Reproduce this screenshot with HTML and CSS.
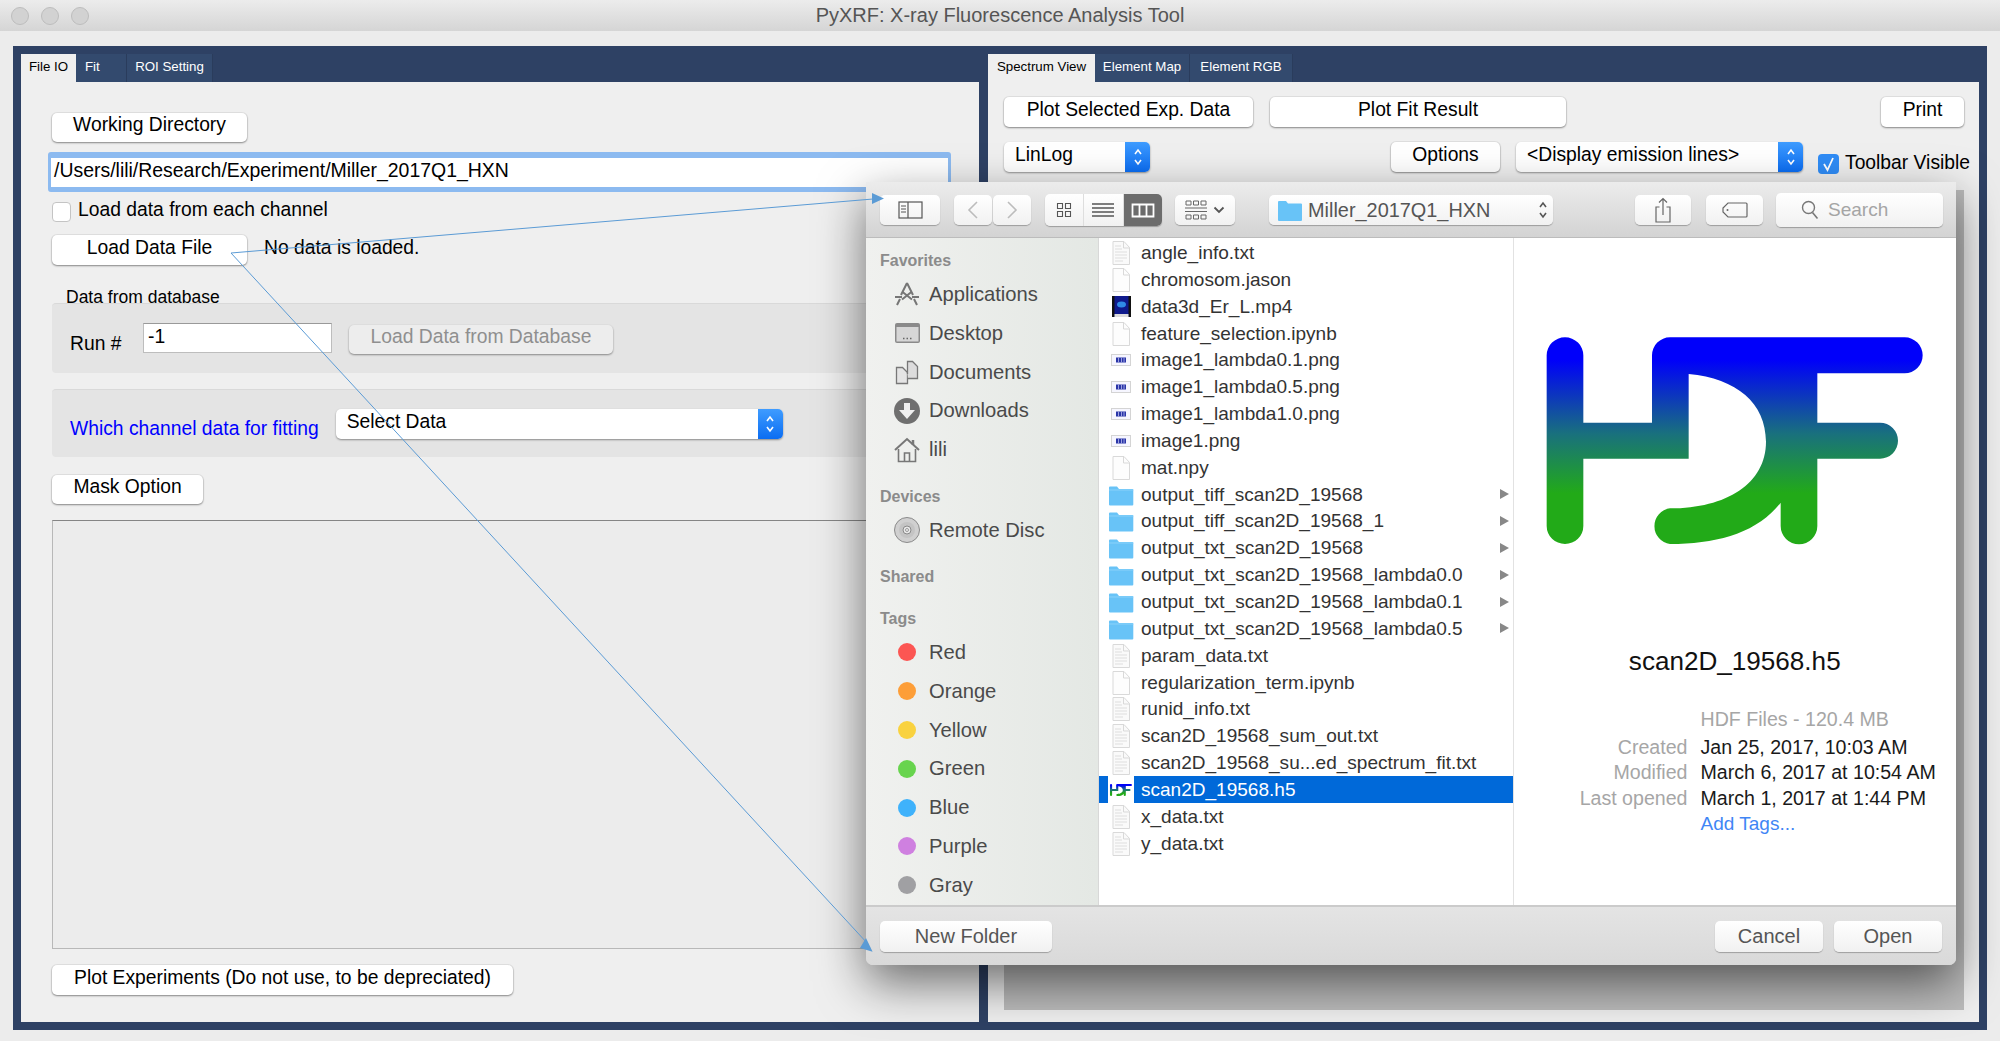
FILE: index.html
```html
<!DOCTYPE html>
<html lang="en">
<head>
  <meta charset="UTF-8">
  <title>PyXRF: X-ray Fluorescence Analysis Tool</title>
  <link rel="stylesheet" href="styles.css">
</head>
<body>
  <svg class="sprite" width="0" height="0">
    <defs>
      <linearGradient id="hdfFill" gradientUnits="userSpaceOnUse" x1="0" y1="120" x2="0" y2="520">
        <stop offset="0" stop-color="#0000fa"/>
        <stop offset="0.55" stop-color="#19707e"/>
        <stop offset="1" stop-color="#22aa18"/>
      </linearGradient>
      <symbol id="hdf" viewBox="0 0 1230 720">
        <path fill="url(#hdfFill)" d="M50 106A55 54 0 0 1 160 106L160 308 366 308 366 106A54 54 0 0 1 420 52L1124 52A54 54 0 0 1 1124 160L862 160 862 308 1050 308A54 54 0 0 1 1050 416L862 416 862 618A55 55 0 0 1 752 618L752 548C680 640 560 672 420 672A54 54 0 0 1 420 565C590 565 708 490 708 365 708 250 620 175 476 162L476 416 160 416 160 618A55 54 0 0 1 50 618Z"/>
      </symbol>
      <symbol id="doc" viewBox="0 0 26 26">
        <path d="M5 1.5h11l5.500 6v17H5z" fill="#fdfdfd" stroke="#d9d9d9"/>
        <path d="M15.500 1.500v6.500h6" fill="none" stroke="#d9d9d9"/>
      </symbol>
      <symbol id="txt" viewBox="0 0 26 26">
        <path d="M5 1.500h11l5.500 6v17H5z" fill="#fafafa" stroke="#d9d9d9"/>
        <path d="M15.500 1.500v6.500h6" fill="none" stroke="#d9d9d9"/>
        <path d="M7 6h6M7 9h7M7 12h12M7 15h12M7 18h12M7 21h8" stroke="#dedede"/>
      </symbol>
      <symbol id="png" viewBox="0 0 26 26">
        <rect x="3.500" y="7.500" width="19" height="11" fill="#f6f6ff" stroke="#d4d4d4"/>
        <rect x="8" y="10.500" width="10" height="5" fill="#2a35a8"/>
        <path d="M10.500 10.500v5M13.500 10.500v5M16 10.500v5" stroke="#9aa0e0"/>
      </symbol>
      <symbol id="mp4" viewBox="0 0 26 26">
        <rect x="4" y="2" width="19" height="21" fill="#0f1a8c"/>
        <rect x="4" y="2" width="2.500" height="21" fill="#111"/>
        <rect x="20.500" y="2" width="2.500" height="21" fill="#111"/>
        <rect x="6.500" y="20" width="14" height="3" fill="#dcdcdc"/>
        <ellipse cx="13.500" cy="10.500" rx="4.500" ry="3" fill="#2f8be6"/>
      </symbol>
      <symbol id="folder" viewBox="0 0 26 26">
        <path d="M1 5.500a1 1 0 0 1 1-1h7l2 2.500h13.500a.8.8 0 0 1 .8.800V22.500a1 1 0 0 1-1 1H2a1 1 0 0 1-1-1z" fill="#68c3f7"/>
        <path d="M1 8h24.300" stroke="#8ad2fa"/>
      </symbol>
      <symbol id="stepper" viewBox="0 0 12 24">
        <path d="M3 9l3-4 3 4M3 15l3 4 3-4" fill="none" stroke="currentColor" stroke-width="1.600"/>
      </symbol>
    </defs>
  </svg>

  <header class="titlebar">
    <div class="lights"><span></span><span></span><span></span></div>
    <div class="title">PyXRF: X-ray Fluorescence Analysis Tool</div>
  </header>

  <main class="workspace">
    <section class="pane pane-left">
      <nav class="tabs">
        <span class="tab tab-on tab-file">File IO</span>
        <span class="tab tab-fit">Fit</span>
        <span class="tab tab-roi">ROI Setting</span>
      </nav>
      <div class="pane-body pane-body-left">
        <button class="btn w-wide">Working Directory</button>
        <div class="path-field">/Users/lili/Research/Experiment/Miller_2017Q1_HXN</div>
        <label class="check-row"><span class="check"></span>Load data from each channel</label>
        <div class="load-row">
          <button class="btn w-wide">Load Data File</button>
          <span class="load-status">No data is loaded.</span>
        </div>
        <div class="group-title">Data from database</div>
        <div class="group group-db">
          <span class="run-label">Run #</span>
          <div class="run-input">-1</div>
          <button class="btn btn-off w-db">Load Data from Database</button>
        </div>
        <div class="group group-fit">
          <span class="fit-label">Which channel data for fitting</span>
          <div class="combo w-select">
            <span class="combo-text">Select Data</span>
            <span class="combo-arrow"><svg width="12" height="24"><use href="#stepper"/></svg></span>
          </div>
        </div>
        <button class="btn w-mask">Mask Option</button>
        <div class="plot-box"></div>
        <button class="btn w-exp">Plot Experiments (Do not use, to be depreciated)</button>
      </div>
    </section>

    <section class="pane pane-right">
      <nav class="tabs">
        <span class="tab tab-on tab-spec">Spectrum View</span>
        <span class="tab tab-map">Element Map</span>
        <span class="tab tab-rgb">Element RGB</span>
      </nav>
      <div class="pane-body pane-body-right">
        <div class="plot-row">
          <button class="btn w-sel">Plot Selected Exp. Data</button>
          <button class="btn w-fit">Plot Fit Result</button>
          <button class="btn w-print">Print</button>
        </div>
        <div class="option-row">
          <div class="combo w-linlog">
            <span class="combo-text">LinLog</span>
            <span class="combo-arrow"><svg width="12" height="24"><use href="#stepper"/></svg></span>
          </div>
          <button class="btn w-options">Options</button>
          <div class="combo w-lines">
            <span class="combo-text">&lt;Display emission lines&gt;</span>
            <span class="combo-arrow"><svg width="12" height="24"><use href="#stepper"/></svg></span>
          </div>
          <label class="toolbar-check">
            <span class="check check-on"><svg width="21" height="20" viewBox="0 0 21 20"><path d="M6 10l3.500 6L15 4" fill="none" stroke="#fff" stroke-width="1.800"/></svg></span>
            Toolbar Visible
          </label>
        </div>
        <div class="spectrum"></div>
      </div>
    </section>
  </main>

  <!-- the open file sheet -->
  <div class="dialog">
    <div class="dlg-toolbar">
      <button class="tool t-side">
        <svg width="25" height="18" viewBox="0 0 25 18"><rect x="1" y="1" width="23" height="16" fill="none" stroke="#555" stroke-width="1.200"/><path d="M10 1v16M3 5h5M3 8h5M3 11h5" stroke="#555" stroke-width="1.200"/></svg>
      </button>
      <div class="nav-pair">
        <button class="tool t-nav"><svg width="14" height="20" viewBox="0 0 14 20"><path d="M11 2L3 10l8 8" fill="none" stroke="#bcbcbc" stroke-width="1.600"/></svg></button>
        <button class="tool t-nav"><svg width="14" height="20" viewBox="0 0 14 20"><path d="M3 2l8 8-8 8" fill="none" stroke="#bcbcbc" stroke-width="1.600"/></svg></button>
      </div>
      <div class="view-group">
        <span class="view-seg"><svg width="16" height="16" viewBox="0 0 16 16"><path d="M1.500 1.500h5v5h-5zM9.500 1.500h5v5h-5zM1.500 9.500h5v5h-5zM9.500 9.500h5v5h-5z" fill="none" stroke="#555" stroke-width="1.100"/></svg></span>
        <span class="view-seg"><svg width="22" height="16" viewBox="0 0 22 16"><path d="M0 2h22M0 6h22M0 10h22M0 14h22" stroke="#555" stroke-width="1.300"/></svg></span>
        <span class="view-seg view-on"><svg width="24" height="15" viewBox="0 0 24 15"><path d="M1.500 1.500h21v12h-21zM8.500 1.500v12M15.500 1.500v12" fill="none" stroke="#fff" stroke-width="1.800"/></svg></span>
      </div>
      <button class="tool t-arrange">
        <svg width="22" height="20" viewBox="0 0 22 20"><path d="M1 1h5v4H1zM8.500 1h5v4h-5zM16 1h5v4h-5zM1 15h5v4H1zM8.500 15h5v4h-5zM16 15h5v4h-5z" fill="none" stroke="#666"/><path d="M0 8h22M0 11.500h22" stroke="#666" stroke-width="1.200"/></svg>
        <svg width="12" height="8" viewBox="0 0 12 8"><path d="M1.500 1.500L6 6l4.500-4.500" fill="none" stroke="#555" stroke-width="1.800"/></svg>
      </button>
      <div class="tool t-path">
        <svg width="24" height="21" viewBox="0 0 24 21"><path d="M0 2a1 1 0 0 1 1-1h7l2 2.500h13a1 1 0 0 1 1 1V20a1 1 0 0 1-1 1H1a1 1 0 0 1-1-1z" fill="#68c3f7"/></svg>
        <span class="path-name">Miller_2017Q1_HXN</span>
        <svg class="path-step" width="12" height="24"><use href="#stepper"/></svg>
      </div>
      <button class="tool t-share">
        <svg width="18" height="26" viewBox="0 0 18 26"><path d="M5.500 10H2v15h14V10h-3.500M9 18V1.500M5 5.500l4-4 4 4" fill="none" stroke="#666" stroke-width="1.200"/></svg>
      </button>
      <button class="tool t-tag">
        <svg width="26" height="16" viewBox="0 0 26 16"><path d="M6 1h18a1 1 0 0 1 1 1v12a1 1 0 0 1-1 1H6l-5-5V6z" fill="none" stroke="#666" stroke-width="1.200"/><circle cx="5.500" cy="8" r="1" fill="#666"/></svg>
      </button>
      <div class="tool t-search">
        <svg width="18" height="20" viewBox="0 0 18 20"><circle cx="7.500" cy="7.500" r="6" fill="none" stroke="#777" stroke-width="1.400"/><path d="M11.500 12.500l5 6" stroke="#777" stroke-width="1.600"/></svg>
        <span>Search</span>
      </div>
    </div>

    <div class="dlg-main">
      <aside class="sidebar">
        <div class="side-head">Favorites</div>
        <div class="side-item">
          <svg class="side-icon" width="26" height="26" viewBox="0 0 26 26"><path d="M13 2L7 14M13 2l6 12M8 10.500l10 8M18 10.500L8 18.500M1 16h7M18 16h7M3 24l3-6M23 24l-3-6" fill="none" stroke="#767676" stroke-width="2"/></svg>
          Applications
        </div>
        <div class="side-item">
          <svg class="side-icon" width="26" height="26" viewBox="0 0 26 26"><rect x="1" y="3" width="25" height="20" rx="2" fill="#8a8a8a"/><rect x="2.500" y="7" width="22" height="14.500" fill="#d6d6d6"/><path d="M9 18.500h1.500M12.500 18.500H14M16 18.500h1.500" stroke="#666" stroke-width="1.500"/></svg>
          Desktop
        </div>
        <div class="side-item">
          <svg class="side-icon" width="26" height="26" viewBox="0 0 26 26"><path d="M2.500 8.500h6l5 5v11h-11z" fill="#e4e4e4" stroke="#777" stroke-width="1.300"/><path d="M13.500 15V2.500h5l5 5v12h-9.500" fill="#dcdcdc" stroke="#777" stroke-width="1.300"/></svg>
          Documents
        </div>
        <div class="side-item">
          <svg class="side-icon" width="26" height="26" viewBox="0 0 26 26"><circle cx="13" cy="13" r="13" fill="#6f6f6f"/><path d="M10 5h6v7h5l-8 9-8-9h5z" fill="#efefef"/></svg>
          Downloads
        </div>
        <div class="side-item">
          <svg class="side-icon" width="26" height="26" viewBox="0 0 26 26"><path d="M1 13L13 2l12 11" fill="none" stroke="#777" stroke-width="2"/><path d="M4.500 12v12.500h17V12M10.500 24.500V16h5v8.500" fill="none" stroke="#777" stroke-width="1.600"/><path d="M19 3v5" stroke="#777" stroke-width="2.500"/></svg>
          lili
        </div>
        <div class="side-head">Devices</div>
        <div class="side-item">
          <svg class="side-icon" width="26" height="26" viewBox="0 0 26 26"><circle cx="13" cy="13" r="12.500" fill="#d0d0d0" stroke="#8a8a8a"/><circle cx="13" cy="13" r="8" fill="#c4c4c4"/><circle cx="13" cy="13" r="4" fill="#e8e8e8" stroke="#8a8a8a"/><circle cx="13" cy="13" r="1.500" fill="#f4f4f4" stroke="#999"/></svg>
          Remote Disc
        </div>
        <div class="side-head">Shared</div>
        <div class="side-head side-head-tags">Tags</div>
        <div class="side-item"><span class="dot dot-red"></span>Red</div>
        <div class="side-item"><span class="dot dot-orange"></span>Orange</div>
        <div class="side-item"><span class="dot dot-yellow"></span>Yellow</div>
        <div class="side-item"><span class="dot dot-green"></span>Green</div>
        <div class="side-item"><span class="dot dot-blue"></span>Blue</div>
        <div class="side-item"><span class="dot dot-purple"></span>Purple</div>
        <div class="side-item"><span class="dot dot-gray"></span>Gray</div>
      </aside>

      <div class="file-list">
        <div class="file"><svg width="26" height="26"><use href="#txt"/></svg>angle_info.txt</div>
        <div class="file"><svg width="26" height="26"><use href="#doc"/></svg>chromosom.jason</div>
        <div class="file"><svg width="26" height="26"><use href="#mp4"/></svg>data3d_Er_L.mp4</div>
        <div class="file"><svg width="26" height="26"><use href="#doc"/></svg>feature_selection.ipynb</div>
        <div class="file"><svg width="26" height="26"><use href="#png"/></svg>image1_lambda0.1.png</div>
        <div class="file"><svg width="26" height="26"><use href="#png"/></svg>image1_lambda0.5.png</div>
        <div class="file"><svg width="26" height="26"><use href="#png"/></svg>image1_lambda1.0.png</div>
        <div class="file"><svg width="26" height="26"><use href="#png"/></svg>image1.png</div>
        <div class="file"><svg width="26" height="26"><use href="#doc"/></svg>mat.npy</div>
        <div class="file dir"><svg width="26" height="26"><use href="#folder"/></svg>output_tiff_scan2D_19568</div>
        <div class="file dir"><svg width="26" height="26"><use href="#folder"/></svg>output_tiff_scan2D_19568_1</div>
        <div class="file dir"><svg width="26" height="26"><use href="#folder"/></svg>output_txt_scan2D_19568</div>
        <div class="file dir"><svg width="26" height="26"><use href="#folder"/></svg>output_txt_scan2D_19568_lambda0.0</div>
        <div class="file dir"><svg width="26" height="26"><use href="#folder"/></svg>output_txt_scan2D_19568_lambda0.1</div>
        <div class="file dir"><svg width="26" height="26"><use href="#folder"/></svg>output_txt_scan2D_19568_lambda0.5</div>
        <div class="file"><svg width="26" height="26"><use href="#txt"/></svg>param_data.txt</div>
        <div class="file"><svg width="26" height="26"><use href="#doc"/></svg>regularization_term.ipynb</div>
        <div class="file"><svg width="26" height="26"><use href="#txt"/></svg>runid_info.txt</div>
        <div class="file"><svg width="26" height="26"><use href="#txt"/></svg>scan2D_19568_sum_out.txt</div>
        <div class="file"><svg width="26" height="26"><use href="#txt"/></svg>scan2D_19568_su...ed_spectrum_fit.txt</div>
        <div class="file file-on"><span class="h5-icon"><svg width="24" height="16" preserveAspectRatio="none"><use href="#hdf"/></svg></span>scan2D_19568.h5</div>
        <div class="file"><svg width="26" height="26"><use href="#txt"/></svg>x_data.txt</div>
        <div class="file"><svg width="26" height="26"><use href="#txt"/></svg>y_data.txt</div>
      </div>

      <div class="preview">
        <svg class="logo" width="410" height="240"><use href="#hdf"/></svg>
        <div class="preview-name">scan2D_19568.h5</div>
        <dl class="meta">
          <dt class="meta-first"></dt><dd class="meta-first meta-kind">HDF Files - 120.4 MB</dd>
          <dt>Created</dt><dd>Jan 25, 2017, 10:03 AM</dd>
          <dt>Modified</dt><dd>March 6, 2017 at 10:54 AM</dd>
          <dt>Last opened</dt><dd>March 1, 2017 at 1:44 PM</dd>
          <dt></dt><dd class="meta-link">Add Tags...</dd>
        </dl>
      </div>
    </div>

    <div class="dlg-footer">
      <button class="dlg-btn btn-folder">New Folder</button>
      <button class="dlg-btn btn-cancel">Cancel</button>
      <button class="dlg-btn">Open</button>
    </div>
  </div>

  <!-- annotation arrows drawn on top of the screenshot -->
  <svg class="arrows" width="2000" height="1041" viewBox="0 0 2000 1041">
    <path d="M231 253L873 199M231 253L868 944" fill="none" stroke="#5b9bd5" stroke-width="1"/>
    <path d="M884 198.500L872 193v11zM872.600 951.700L866 938 860 948z" fill="#5b9bd5"/>
  </svg>
</body>
</html>
```

FILE: styles.css
```css
:root {
  --navy: #2e4164;
  --panel: #efefef;
  --sheet-text: #333;
}

* {
  box-sizing: border-box;
  margin: 0;
  padding: 0;
}

body {
  position: relative;
  width: 2000px;
  height: 1041px;
  overflow: hidden;
  background: #ececec;
  color: #000;
  font-family: "Liberation Sans", Arial, sans-serif;
  font-size: 19.300px;
}

button {
  font: inherit;
  color: inherit;
  border: none;
}

.sprite {
  position: absolute;
}

/* title bar */

.titlebar {
  display: grid;
  grid-template-columns: 1fr auto 1fr;
  align-items: center;
  height: 31px;
  background: linear-gradient(#ececec, #d5d5d5);
}

.lights {
  display: flex;
  gap: 12px;
  padding-left: 11px;
}

.lights span {
  width: 18px;
  height: 18px;
  border-radius: 50%;
  background: #d2d2d2;
  border: 1px solid #bdbdbd;
}

.title {
  color: #555;
  font-size: 20px;
}

/* the two main panes */

.workspace {
  display: flex;
  height: 984px;
  margin: 15px 0 0 13px;
}

.pane {
  display: flex;
  flex-direction: column;
  background: var(--navy);
  padding-bottom: 8px;
}

.pane-left {
  width: 975px;
  padding-left: 8px;
  padding-right: 9px;
}

.pane-right {
  width: 999px;
  padding-right: 8px;
}

.tabs {
  display: flex;
  height: 36px;
  padding-top: 8px;
}

.tab {
  display: flex;
  align-items: center;
  justify-content: center;
  padding-bottom: 3px;
  font-size: 13.300px;
  color: #fff;
  background: #334a6e;
  border-right: 1px solid #2a3c5c;
}

.tab-on {
  color: #000;
  background: var(--panel);
  border: none;
}

.tab-file { width: 55px; }
.tab-fit { width: 51px; justify-content: flex-start; padding-left: 9px; }
.tab-roi { width: 86px; }
.tab-spec { width: 107px; }
.tab-map { width: 95px; }
.tab-rgb { width: 103px; }

.pane-body {
  flex: 1;
  background: var(--panel);
}

.pane-body-left {
  padding: 31px 29px 0 31px;
}

.pane-body-right {
  padding: 15px 15px 0 16px;
}

/* qt style controls */

.btn {
  display: block;
  flex: none;
  height: 29px;
  padding-bottom: 5px;
  background: #fff;
  border-radius: 5px;
  box-shadow: 0 1px 2px rgba(0, 0, 0, 0.4), 0 0 0 1px #e2e2e2;
  text-align: center;
}

.btn-off {
  color: #8f8f8f;
  background: #ededed;
}

.w-wide { width: 195px; }
.w-db { width: 264px; height: 29px; margin: 2px 0 0 17px; }
.w-mask { width: 151px; margin-top: 18px; }
.w-exp { width: 461px; height: 30px; margin-top: 16px; }
.w-sel { width: 249px; height: 30px; }
.w-fit { width: 296px; height: 30px; margin-left: 17px; }
.w-print { width: 83px; height: 30px; margin-left: auto; }
.w-options { width: 109px; height: 30px; margin-left: 241px; }
.w-linlog { width: 146px; }
.w-lines { width: 287px; margin-left: 16px; }
.w-select { width: 447px; margin-left: 17px; }

.path-field {
  width: 903px;
  height: 40px;
  margin: 10px 0 0 -4px;
  padding: 0 3px 4px;
  font-size: 19.450px;
  line-height: 25px;
  background: #fff;
  border: solid #8cbaf0;
  border-width: 6px 3px 5px;
  border-radius: 3px;
  white-space: nowrap;
}

.check-row {
  display: flex;
  align-items: flex-start;
  gap: 7px;
  height: 20px;
  margin-top: 10px;
  line-height: 16px;
}

.check {
  flex: none;
  width: 19px;
  height: 20px;
  background: #fff;
  border: 1px solid #c4c4c4;
  border-radius: 4px;
}

.check-on {
  width: 21px;
  background: #2f8cf6;
  border: none;
}

.load-row {
  display: flex;
  align-items: center;
  height: 30px;
  margin-top: 13px;
}

.load-row .btn {
  height: 30px;
}

.load-status {
  margin-left: 17px;
  padding-bottom: 5px;
}

.group-title {
  height: 15px;
  margin: 23px 0 0 14px;
  font-size: 17.500px;
  line-height: 18px;
}

.group {
  display: flex;
  background: #e4e4e4;
  border-top: 1px solid #d9d9d9;
  border-radius: 4px;
}

.group-db {
  height: 70px;
  padding: 19px 0 0 18px;
}

.group-fit {
  height: 68px;
  margin-top: 16px;
  padding: 19px 0 0 18px;
  align-items: flex-start;
}

.run-label {
  width: 55px;
  margin-top: 10px;
  margin-right: 18px;
}

.run-input {
  width: 189px;
  height: 30px;
  padding: 0 3px 5px 4px;
  line-height: 25px;
  background: #fff;
  border: 1px solid #bdbdbd;
  border-top-color: #999;
}

.fit-label {
  margin-top: 9px;
  color: #0000ff;
}

.combo {
  display: flex;
  flex: none;
  justify-content: space-between;
  height: 30px;
  background: #fff;
  border-radius: 5px;
  box-shadow: 0 1px 2px rgba(0, 0, 0, 0.4);
}

.combo-text {
  padding-left: 11px;
  line-height: 25px;
}

.combo-arrow {
  display: flex;
  align-items: center;
  justify-content: center;
  width: 25px;
  color: #fff;
  background: linear-gradient(#3f9cff, #0b6df2);
  border-radius: 0 5px 5px 0;
}

.plot-box {
  height: 429px;
  margin-top: 16px;
  background: #ececec;
  border: 1px solid #b8b8b8;
  border-top-color: #858585;
}

.plot-row,
.option-row {
  display: flex;
}

.option-row {
  margin-top: 15px;
}

.toolbar-check {
  display: flex;
  flex: none;
  gap: 6px;
  height: 20px;
  margin: 12px 0 0 15px;
  line-height: 18px;
  white-space: nowrap;
}

.spectrum {
  width: 960px;
  height: 820px;
  margin-top: 16px;
  background: #bcbcbc;
}

/* open file sheet */

.dialog {
  position: absolute;
  left: 866px;
  top: 182px;
  display: flex;
  flex-direction: column;
  width: 1090px;
  height: 783px;
  border-radius: 0 0 7px 7px;
  background: #e0e0e0;
  box-shadow: 0 18px 48px rgba(0, 0, 0, 0.55);
  color: var(--sheet-text);
  font-size: 19.050px;
}

.dlg-toolbar {
  display: flex;
  align-items: center;
  flex: none;
  height: 56px;
  padding: 1px 0 0 14px;
  background: linear-gradient(#ececec, #d3d3d3);
  border-bottom: 1px solid #bcbcbc;
}

.tool {
  display: flex;
  align-items: center;
  justify-content: center;
  height: 30px;
  background: linear-gradient(#fff, #f1f1f1);
  border-radius: 5px;
  box-shadow: 0 1px 1px rgba(0, 0, 0, 0.28);
}

.t-side { width: 60px; }

.nav-pair {
  display: flex;
  gap: 1px;
  margin-left: 14px;
}

.t-nav { width: 38px; }

.view-group {
  display: flex;
  width: 117px;
  height: 32px;
  margin-left: 14px;
  background: linear-gradient(#fff, #f1f1f1);
  border-radius: 5px;
  box-shadow: 0 1px 1px rgba(0, 0, 0, 0.28);
}

.view-seg {
  display: flex;
  align-items: center;
  justify-content: center;
  flex: 1;
  border-right: 1px solid #dedede;
}

.view-on {
  background: #6c6c6c;
  border: none;
  border-radius: 0 5px 5px 0;
}

.t-arrange {
  gap: 6px;
  width: 60px;
  margin-left: 13px;
}

.t-path {
  justify-content: flex-start;
  width: 284px;
  margin-left: 34px;
  padding-left: 9px;
  font-size: 19.900px;
  color: #555;
}

.path-name {
  flex: 1;
  margin-left: 6px;
}

.path-step {
  margin-right: 4px;
  color: #555;
}

.t-share {
  width: 56px;
  margin-left: 82px;
}

.t-tag {
  width: 57px;
  margin-left: 15px;
}

.t-search {
  justify-content: flex-start;
  gap: 9px;
  width: 167px;
  height: 34px;
  margin-left: 13px;
  padding-left: 25px;
  color: #a5a5a5;
}

.dlg-main {
  display: flex;
  flex: 1;
  min-height: 0;
}

.sidebar {
  flex: none;
  width: 232.500px;
  padding-top: 13px;
  background: linear-gradient(90deg, #f0f1ef, #e4e8e4);
  border-right: 1px solid #d8d8d8;
  color: #4a4a4a;
}

.side-head {
  height: 20px;
  margin: 18px 0 3.600px 14px;
  font-size: 16px;
  font-weight: bold;
  line-height: 20px;
  color: #8b8b8b;
}

.side-head:first-child {
  margin-top: 0;
}

.side-head-tags {
  margin-top: 22px;
}

.side-item {
  display: flex;
  align-items: center;
  gap: 9px;
  height: 38.800px;
  padding: 1px 0 0 28px;
  font-size: 20.200px;
}

.side-icon {
  flex: none;
}

.dot {
  width: 18px;
  height: 18px;
  margin: 0 4px;
  border-radius: 50%;
}

.dot-red { background: #fc5653; }
.dot-orange { background: #fd9e38; }
.dot-yellow { background: #f9d23f; }
.dot-green { background: #68d44e; }
.dot-blue { background: #3fb2fb; }
.dot-purple { background: #cf80e0; }
.dot-gray { background: #a0a0a3; }

.file-list {
  flex: none;
  width: 415px;
  padding-top: 1.600px;
  background: #fff;
  border-right: 1px solid #e2e2e2;
}

.file {
  display: flex;
  align-items: center;
  gap: 7px;
  height: 26.850px;
  padding-left: 9.500px;
  white-space: nowrap;
}

.dir {
  position: relative;
}

.dir::after {
  content: "";
  position: absolute;
  right: 4px;
  top: 8px;
  border-left: 9px solid #888;
  border-top: 5px solid transparent;
  border-bottom: 5px solid transparent;
}

.file-on {
  color: #fff;
  background: #0069d9;
}

.h5-icon {
  display: flex;
  align-items: center;
  width: 26px;
  height: 100%;
  padding: 0 1px;
  background: #fff;
}

.preview {
  flex: 1;
  display: flex;
  flex-direction: column;
  align-items: center;
  padding-top: 82px;
  background: #fff;
}

.preview-name {
  height: 30px;
  margin-top: 86px;
  font-size: 26.100px;
  line-height: 30px;
  color: #111;
}

.meta {
  display: grid;
  grid-template-columns: 174px 1fr;
  column-gap: 13px;
  width: 100%;
  margin-top: 31px;
  font-size: 19.600px;
  line-height: 25.400px;
}

.meta .meta-first {
  margin-bottom: 2.500px;
}

.meta dt {
  text-align: right;
  color: #a6a6a6;
}

.meta dd {
  color: #1a1a1a;
  white-space: nowrap;
}

.meta .meta-kind {
  color: #a6a6a6;
}

.meta .meta-link {
  color: #3f86f5;
  font-size: 19px;
}

.dlg-footer {
  display: flex;
  flex: none;
  height: 60px;
  padding: 14px 14px 0;
  background: linear-gradient(#e4e4e4, #d9d9d9);
  border-top: 2px solid #cbcbcb;
  border-radius: 0 0 7px 7px;
}

.dlg-btn {
  width: 108px;
  height: 31px;
  padding-bottom: 1px;
  background: linear-gradient(#fff, #f1f1f1);
  border-radius: 5px;
  box-shadow: 0 1px 1px rgba(0, 0, 0, 0.28);
  color: #555;
  font-size: 20px;
}

.btn-folder {
  width: 172px;
}

.btn-cancel {
  margin: 0 11px 0 auto;
}

.arrows {
  position: absolute;
  left: 0;
  top: 0;
  pointer-events: none;
}
```
